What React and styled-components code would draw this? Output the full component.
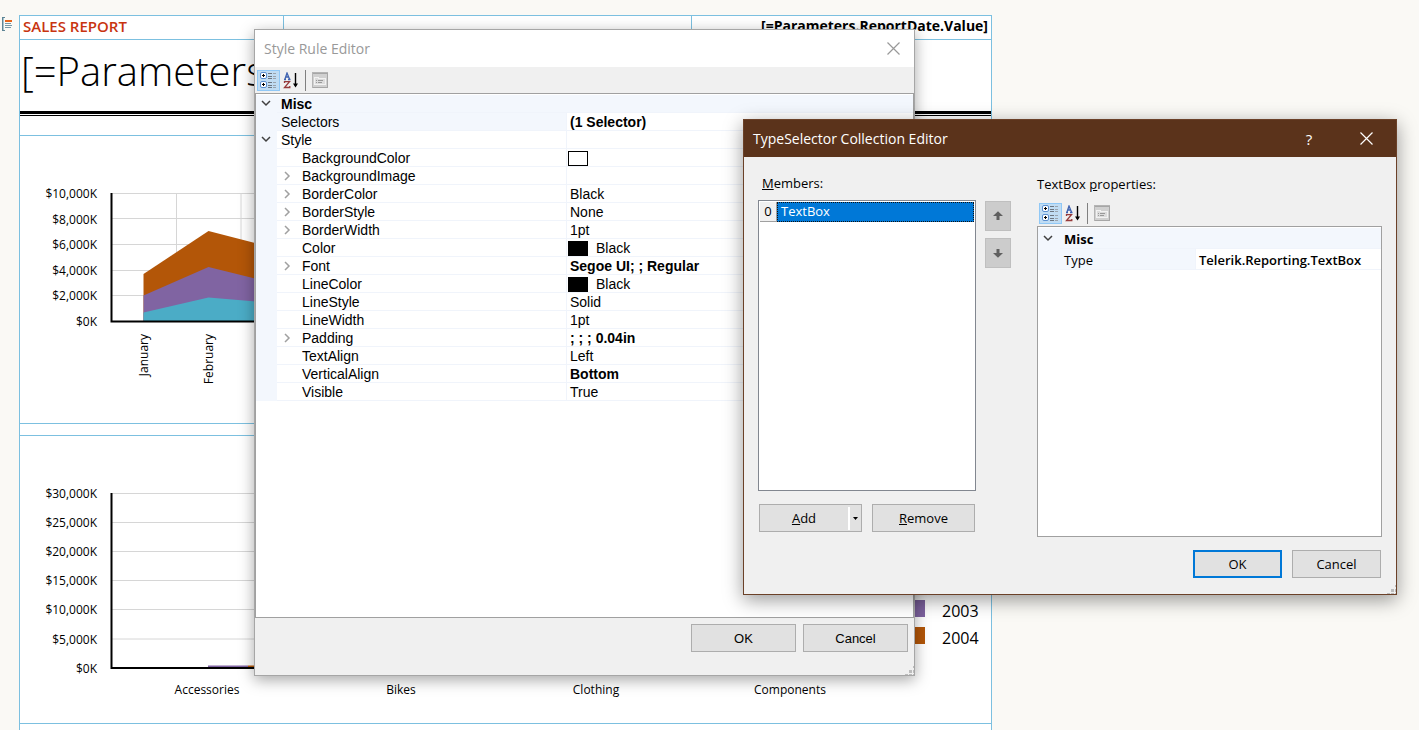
import React from 'react';
import styled, { createGlobalStyle } from 'styled-components';

const ui = '"Open Sans", "Noto Sans", sans-serif';
const grid = '"Liberation Sans", Arial, sans-serif';
const guide = '#7cc0e0';

const GlobalStyle = createGlobalStyle`
  * { box-sizing: border-box; }
  body {
    margin: 0;
    background: #faf9f5;
    color: #000;
    font-family: ${ui};
    font-size: 13px;
  }
  button { font: inherit; color: inherit; padding: 0; }
`;

/* ---------- designer surface ---------- */

const Designer = styled.main`
  position: relative;
  display: flex;
  min-height: 100vh;
  padding-top: 15px;
  overflow: hidden;
`;

const Gutter = styled.div`
  flex: 0 0 19px;
  padding: 2px 0 0 2px;
`;

const Report = styled.section`
  flex: 0 1 973px;
  display: flex;
  flex-direction: column;
  background: #fff;
  border: 1px solid ${guide};
  border-bottom: 0;
`;

const HeaderRow = styled.header`
  display: flex;
  justify-content: space-between;
  height: 24px;
  border-bottom: 1px solid ${guide};
  line-height: 20px;
`;

const HeaderCell = styled.div`
  width: ${(p) => p.$width}px;
  padding: 0 3px;
  border: solid ${guide};
`;

const ReportName = styled(HeaderCell)`
  border-width: 0 1px 0 0;
  font-size: 15px;
  font-weight: 600;
  color: #c8340f;
`;

const ReportDate = styled(HeaderCell)`
  border-width: 0 0 0 1px;
  font-size: 14px;
  font-weight: 700;
  text-align: right;
`;

const TitleRow = styled.div`
  height: 74px;
  padding: 4px 1px;
  border-bottom: 3px solid #000;
  font-size: 40px;
  line-height: 54px;
  font-weight: 300;
  overflow: hidden;
`;

const ThinRule = styled.div`
  height: 2px;
  border-bottom: 1px solid #000;
`;

const ChartBox = styled.figure`
  margin: ${(p) => p.$gap}px 0 0;
  height: 289px;
  border: solid ${guide};
  border-width: 1px 0;
  svg { display: block; }
  text { font-family: ${ui}; font-size: 12px; }
  text.legend { font-size: 16px; }
`;

/* ---------- windows ---------- */

const Window = styled.section`
  position: absolute;
  left: ${(p) => p.$x}px;
  top: ${(p) => p.$y}px;
  width: ${(p) => p.$w}px;
  height: ${(p) => p.$h}px;
  display: flex;
  flex-direction: column;
  border: 1px solid ${(p) => p.$edge};
  background: #f0f0f0;
  box-shadow: ${(p) => p.$shadow};
`;

const TitleBar = styled.header`
  display: flex;
  align-items: center;
  height: 37px;
  padding: 0 12px 0 9px;
  background: ${(p) => p.$bg};
  color: ${(p) => p.$fg};
  font-size: 14px;
`;

const WindowTitle = styled.h2`
  flex: 1;
  margin: 0;
  font-size: inherit;
  font-weight: 400;
`;

const CaptionButton = styled.button`
  display: grid;
  place-items: center;
  width: ${(p) => p.$w || 18}px;
  height: 30px;
  border: 0;
  background: none;
  font-size: 15px;
  line-height: 28px;
`;

const Toolbar = styled.div`
  display: flex;
  align-items: center;
  height: 26px;
  padding: 0 2px;
`;

const ToolButton = styled.button`
  display: grid;
  place-items: center;
  width: 23px;
  height: 21px;
  border: 1px solid ${(p) => (p.$on ? '#90c8f6' : 'transparent')};
  background: ${(p) => (p.$on ? '#c0dcf3' : 'none')};
`;

const ToolSeparator = styled.span`
  width: 1px;
  height: 21px;
  margin: 0 2px;
  background: #808080;
`;

const GridFrame = styled.div`
  flex: 1;
  padding-top: 1px;
  background: #fff;
  border: 1px solid #a0a0a0;
`;

const PropTable = styled.table`
  width: 100%;
  table-layout: fixed;
  border-collapse: separate;
  border-spacing: 0;
  font-family: ${(p) => p.$font};
  font-size: ${(p) => p.$size}px;
  line-height: ${(p) => p.$row - 3}px;
  th, td {
    height: ${(p) => p.$row}px;
    padding: 2px 0 0;
    text-align: left;
    font-weight: 400;
    white-space: nowrap;
    border-bottom: 1px solid #f0f4fb;
  }
`;

const GutterCol = styled.col`
  width: ${(p) => p.$w}px;
`;

const GutterCell = styled.td`
  && {
    padding: 0;
    background: #f3f7fd;
    border-color: #f3f7fd;
  }
  svg { display: block; margin: 0 0 0 5px; }
`;

const NameCell = styled.th`
  && {
    padding-left: ${(p) => (p.$nested ? 0 : 4)}px;
    background: ${(p) => (p.$shade ? '#f3f7fd' : '#fff')};
    font-weight: ${(p) => (p.$bold ? 700 : 400)};
  }
`;

const Nested = styled.span`
  display: grid;
  grid-template-columns: 25px 1fr;
  svg { display: block; margin: 2px 0 0 6px; }
`;

const ValueCell = styled.td`
  && {
    padding-left: 3px;
    border-left: 1px solid #f0f4fb;
    font-weight: ${(p) => (p.$bold ? p.$weight || 700 : 400)};
  }
`;

const Swatched = styled.span`
  display: flex;
  gap: 8px;
  height: 15px;
  margin-left: -2px;
`;

const Swatch = styled.i`
  width: 20px;
  height: 15px;
  border: 1px solid #000;
  background: ${(p) => p.$color};
`;

const PushButton = styled.button`
  width: ${(p) => p.$w}px;
  height: 28px;
  border: ${(p) => (p.$default ? '2px solid #0078d7' : '1px solid #adadad')};
  background: #e1e1e1;
  font-family: ${(p) => p.$font || ui};
`;

const Footer = styled.footer`
  display: flex;
  justify-content: flex-end;
  gap: ${(p) => p.$gap}px;
  padding: ${(p) => p.$pad};
`;

const Grip = styled.svg`
  position: absolute;
  right: 0;
  bottom: 0;
`;

/* ---------- collection editor ---------- */

const EditorBody = styled.div`
  flex: 1;
  display: grid;
  grid-template-columns: 218px 27px 1fr;
  column-gap: 9px;
  padding: 16px 14px 0;
`;

const Column = styled.div`
  display: flex;
  flex-direction: column;
  padding-left: ${(p) => p.$indent || 0}px;
`;

const FieldLabel = styled.span`
  height: 27px;
  padding-left: ${(p) => p.$indent || 0}px;
  line-height: ${(p) => p.$line || 20}px;
`;

const MemberList = styled.ul`
  height: 291px;
  margin: 0;
  padding: 1px;
  list-style: none;
  border: 1px solid #828790;
  background: #fff;
`;

const Member = styled.li`
  display: flex;
  height: 20px;
  line-height: 17px;
`;

const MemberIndex = styled.span`
  width: 17px;
  padding-top: 1px;
  text-align: center;
  background: #f0f0f0;
  border: solid #a0a0a0;
  border-width: 0 1px 1px 0;
`;

const MemberName = styled.span`
  flex: 1;
  padding-left: 3px;
  background: #0078d7;
  color: #fff;
  border: 1px dotted #111;
`;

const MemberActions = styled.div`
  display: flex;
  gap: 10px;
  padding: 13px 1px 0;
`;

const SplitButton = styled.div`
  display: flex;
  align-items: center;
  width: 103px;
  height: 28px;
  border: 1px solid #adadad;
  background: #e1e1e1;
`;

const SplitPart = styled.button`
  display: grid;
  place-items: center;
  flex: ${(p) => (p.$menu ? '0 0 13px' : 1)};
  height: 23px;
  border: 0;
  border-left: ${(p) => (p.$menu ? '2px solid #fff' : 0)};
  background: none;
`;

const MoveButtons = styled.div`
  display: flex;
  flex-direction: column;
  gap: 7px;
  padding-top: 28px;
`;

const MoveButton = styled.button`
  display: grid;
  place-items: center;
  width: 26px;
  height: 30px;
  border: 1px solid #bfbfbf;
  background: #cccccc;
`;

/* ---------- icons ---------- */

const CloseIcon = ({ color }) => (
  <svg width="13" height="13" viewBox="0 0 13 13" stroke={color} strokeWidth="1.200" fill="none">
    <path d="M.5 .5l12 12M12.5 .5l-12 12" />
  </svg>
);

const CategorizedIcon = () => (
  <svg width="17" height="17" viewBox="0 0 17 17">
    {[0, 9].map((y) => (
      <g key={y} transform={`translate(0 ${y})`}>
        <rect x=".5" y=".5" width="6" height="6" rx="1.500" fill="#fff" stroke="#5b8fd0" />
        <path d="M2 3.500h3M3.500 2v3" stroke="#000" />
        <path d="M8 1.500h4M8 4.500h4M8 6.500h4" stroke="#6d7681" />
        <path d="M13 1.500h3M13 4.500h3M13 6.500h3" stroke="#9aa3ad" />
      </g>
    ))}
  </svg>
);

const SortIcon = () => (
  <svg width="18" height="17" viewBox="0 0 18 17" fill="none">
    <path d="M1 7.500h2M5 7.500h2.500M2 7L4 1l2.500 6M2.500 5h3" stroke="#3f62b0" strokeWidth="1.300" />
    <path d="M1.500 11V9.700h5L1.500 15.500h5.300V14" stroke="#973a3a" strokeWidth="1.300" />
    <path d="M12.500 1v13" stroke="#000" strokeWidth="1.400" />
    <path d="M10 11.500h5l-2.500 4z" fill="#000" />
  </svg>
);

const PagesIcon = () => (
  <svg width="16" height="16" viewBox="0 0 16 16" fill="none" shapeRendering="crispEdges">
    <rect x=".5" y=".5" width="15" height="15" fill="#d0d0d0" stroke="#b4b4b4" />
    <path d="M1 1.500h14M15.500 1v15M1 15.500h15" stroke="#a6a6a6" />
    <path d="M2.500 12.500v-7h4v1h7v6z" fill="#dcdcdc" stroke="#f2f2f2" />
    <path d="M4 8.500h1M6 8.500h5M4 10.500h1M6 10.500h4" stroke="#999" />
  </svg>
);

const ChevronDown = () => (
  <svg width="10" height="7" viewBox="0 0 10 7" fill="none" stroke="#404040" strokeWidth="1.500">
    <path d="M1 1l4 4 4-4" />
  </svg>
);

const ChevronRight = () => (
  <svg width="8" height="10" viewBox="0 0 8 10" fill="none" stroke="#a0a0a0" strokeWidth="1.500">
    <path d="M2 1l4 4-4 4" />
  </svg>
);

const MoveArrow = ({ down }) => (
  <svg width="10" height="10" viewBox="0 0 10 10" fill="#606060">
    <path d={down ? 'M3.500 1h3v4H10L5 9.800 0 5h3.500z' : 'M5 .2L10 5H6.500v4h-3V5H0z'} />
  </svg>
);

const ReportItemIcon = () => (
  <svg width="11" height="15" viewBox="0 0 11 15" fill="none" shapeRendering="crispEdges">
    <path d="M0 1h2v12H0z" fill="#a9c3ce" />
    <path d="M3 .5H.5v13H3" stroke="#5d8596" />
    <path d="M3 4h7" stroke="#e8641b" strokeWidth="2" />
    <path d="M3 6.500h6M3 8.500h7M3 10.500h6" stroke="#7798a6" />
  </svg>
);

const ResizeGrip = () => (
  <Grip width="10" height="10" viewBox="0 0 10 10" fill="#bcbcbc" aria-hidden="true">
    <path d="M9 1h1v2H9zM5 5h3v3H5zM9 5h1v3H9zM1 9h3v1H1zM5 9h3v1H5zM9 9h1v1H9z" />
  </Grip>
);

/* ---------- charts ---------- */

const MonthlyChart = () => (
  <svg width="971" height="287" viewBox="20 136 971 287" role="img" aria-label="Sales by month">
    <path d="M112 193.500H300M112 218.500H300M112 244.500H300M112 270.500H300M112 295.500H300M176.500 193V321M241 193V321" stroke="#d6d6d6" />
    <path d="M143.500 274L208.500 231 273 247.500V321H143.500z" fill="#b35608" />
    <path d="M143.500 295.500L208.500 267 273 283V321H143.500z" fill="#8064a2" />
    <path d="M143.500 312.500L208.500 297.500 273 303V321H143.500z" fill="#4bacc6" />
    <path d="M111.500 193V321.500H300" fill="none" stroke="#000" strokeWidth="2" />
    {['$10,000K', '$8,000K', '$6,000K', '$4,000K', '$2,000K', '$0K'].map((t, i) => (
      <text key={t} x="97" y={198 + Math.round(i * 25.6)} textAnchor="end">{t}</text>
    ))}
    {['January', 'February'].map((t, i) => (
      <text key={t} transform={`translate(${148 + i * 65} 334) rotate(-90)`} textAnchor="end">{t}</text>
    ))}
  </svg>
);

const CategoryChart = () => (
  <svg width="971" height="287" viewBox="20 436 971 287" role="img" aria-label="Sales by category">
    <path d="M112 493.500H300M112 522.500H300M112 551.500H300M112 580.500H300M112 609.500H300M112 639H300" stroke="#d6d6d6" />
    <path d="M208 665.500h40v2h-40z" fill="#8064a2" />
    <path d="M248 665.500h40v2h-40z" fill="#b35608" />
    <path d="M111.500 493V668H900" fill="none" stroke="#000" strokeWidth="2" />
    {['$30,000K', '$25,000K', '$20,000K', '$15,000K', '$10,000K', '$5,000K', '$0K'].map((t, i) => (
      <text key={t} x="97" y={498 + Math.round(i * 29.1)} textAnchor="end">{t}</text>
    ))}
    {['Accessories', 'Bikes', 'Clothing', 'Components'].map((t, i) => (
      <text key={t} x={207 + Math.round(i * 194.3)} y="694" textAnchor="middle">{t}</text>
    ))}
    <path d="M907 600h18v17h-18z" fill="#8064a2" />
    <path d="M907 627h18v17h-18z" fill="#b35608" />
    <text className="legend" x="942" y="617">2003</text>
    <text className="legend" x="942" y="644">2004</text>
  </svg>
);

/* ---------- property grids ---------- */

const styleProps = [
  { name: 'BackgroundColor', swatch: '#fff' },
  { name: 'BackgroundImage', open: true },
  { name: 'BorderColor', value: 'Black', open: true },
  { name: 'BorderStyle', value: 'None', open: true },
  { name: 'BorderWidth', value: '1pt', open: true },
  { name: 'Color', value: 'Black', swatch: '#000' },
  { name: 'Font', value: 'Segoe UI; ; Regular', open: true, bold: true },
  { name: 'LineColor', value: 'Black', swatch: '#000' },
  { name: 'LineStyle', value: 'Solid' },
  { name: 'LineWidth', value: '1pt' },
  { name: 'Padding', value: '; ; ; 0.04in', open: true, bold: true },
  { name: 'TextAlign', value: 'Left' },
  { name: 'VerticalAlign', value: 'Bottom', bold: true },
  { name: 'Visible', value: 'True' },
];

const GridTools = () => (
  <>
    <ToolButton type="button" $on aria-label="Categorized"><CategorizedIcon /></ToolButton>
    <ToolButton type="button" aria-label="Alphabetical"><SortIcon /></ToolButton>
    <ToolSeparator />
    <ToolButton type="button" disabled aria-label="Property pages"><PagesIcon /></ToolButton>
  </>
);

const StyleGrid = () => (
  <PropTable $font={grid} $size={14} $row={18}>
    <colgroup>
      <GutterCol $w={21} />
      <GutterCol $w={289} />
      <col />
    </colgroup>
    <tbody>
      <tr>
        <GutterCell><ChevronDown /></GutterCell>
        <NameCell colSpan="2" $shade $bold>Misc</NameCell>
      </tr>
      <tr>
        <GutterCell />
        <NameCell $shade>Selectors</NameCell>
        <ValueCell $bold>(1 Selector)</ValueCell>
      </tr>
      <tr>
        <GutterCell><ChevronDown /></GutterCell>
        <NameCell>Style</NameCell>
        <ValueCell />
      </tr>
      {styleProps.map((p) => (
        <tr key={p.name}>
          <GutterCell />
          <NameCell $nested>
            <Nested>
              <span>{p.open && <ChevronRight />}</span>
              {p.name}
            </Nested>
          </NameCell>
          <ValueCell $bold={p.bold}>
            {p.swatch ? <Swatched><Swatch $color={p.swatch} />{p.value}</Swatched> : p.value}
          </ValueCell>
        </tr>
      ))}
    </tbody>
  </PropTable>
);

const TypeGrid = () => (
  <PropTable $font={ui} $size={13} $row={21}>
    <colgroup>
      <GutterCol $w={22} />
      <GutterCol $w={135} />
      <col />
    </colgroup>
    <tbody>
      <tr>
        <GutterCell><ChevronDown /></GutterCell>
        <NameCell colSpan="2" $shade $bold>Misc</NameCell>
      </tr>
      <tr>
        <GutterCell />
        <NameCell $shade>Type</NameCell>
        <ValueCell $bold $weight={600}>Telerik.Reporting.TextBox</ValueCell>
      </tr>
    </tbody>
  </PropTable>
);

const StyleRuleEditor = () => (
  <Window $x={254} $y={29} $w={661} $h={647} $edge="#a6a6a6" $shadow="0 4px 14px rgba(0,0,0,.35)">
    <TitleBar $bg="#fff" $fg="#999">
      <WindowTitle>Style Rule Editor</WindowTitle>
      <CaptionButton type="button" aria-label="Close"><CloseIcon color="#999" /></CaptionButton>
    </TitleBar>
    <Toolbar><GridTools /></Toolbar>
    <GridFrame><StyleGrid /></GridFrame>
    <Footer $gap={7} $pad="6px 6px 23px">
      <PushButton type="button" $w={105} $font={grid}>OK</PushButton>
      <PushButton type="button" $w={105} $font={grid}>Cancel</PushButton>
    </Footer>
    <ResizeGrip />
  </Window>
);

const CollectionEditor = () => (
  <Window $x={743} $y={119} $w={654} $h={476} $edge="#6b4128" $shadow="0 5px 18px rgba(0,0,0,.4)">
    <TitleBar $bg="#5b331b" $fg="#fff">
      <WindowTitle>TypeSelector Collection Editor</WindowTitle>
      <CaptionButton type="button" $w={78} aria-label="Help">?</CaptionButton>
      <CaptionButton type="button" $w={36} aria-label="Close"><CloseIcon color="#fff" /></CaptionButton>
    </TitleBar>
    <EditorBody>
      <Column>
        <FieldLabel id="members" $indent={4}><u>M</u>embers:</FieldLabel>
        <MemberList aria-labelledby="members">
          <Member><MemberIndex>0</MemberIndex><MemberName>TextBox</MemberName></Member>
        </MemberList>
        <MemberActions>
          <SplitButton>
            <SplitPart type="button"><span><u>A</u>dd</span></SplitPart>
            <SplitPart type="button" $menu aria-label="Add menu">
              <svg width="5" height="3" viewBox="0 0 5 3"><path d="M0 0h5L2.500 3z" /></svg>
            </SplitPart>
          </SplitButton>
          <PushButton type="button" $w={103}><u>R</u>emove</PushButton>
        </MemberActions>
      </Column>
      <MoveButtons>
        <MoveButton type="button" aria-label="Move up"><MoveArrow /></MoveButton>
        <MoveButton type="button" aria-label="Move down"><MoveArrow down /></MoveButton>
      </MoveButtons>
      <Column $indent={16}>
        <FieldLabel $line={22}><span>TextBox <u>p</u>roperties:</span></FieldLabel>
        <Toolbar><GridTools /></Toolbar>
        <GridFrame><TypeGrid /></GridFrame>
      </Column>
    </EditorBody>
    <Footer $gap={10} $pad="13px 15px 16px">
      <PushButton type="button" $w={89} $default>OK</PushButton>
      <PushButton type="button" $w={89}>Cancel</PushButton>
    </Footer>
    <ResizeGrip />
  </Window>
);

export default function App() {
  return (
    <>
      <GlobalStyle />
      <Designer>
        <Gutter><ReportItemIcon /></Gutter>
        <Report>
          <HeaderRow>
            <ReportName $width={264}>SALES REPORT</ReportName>
            <ReportDate $width={300}>[=Parameters.ReportDate.Value]</ReportDate>
          </HeaderRow>
          <TitleRow>[=Parameters</TitleRow>
          <ThinRule />
          <ChartBox $gap={19}><MonthlyChart /></ChartBox>
          <ChartBox $gap={11}><CategoryChart /></ChartBox>
        </Report>
        <StyleRuleEditor />
        <CollectionEditor />
      </Designer>
    </>
  );
}
